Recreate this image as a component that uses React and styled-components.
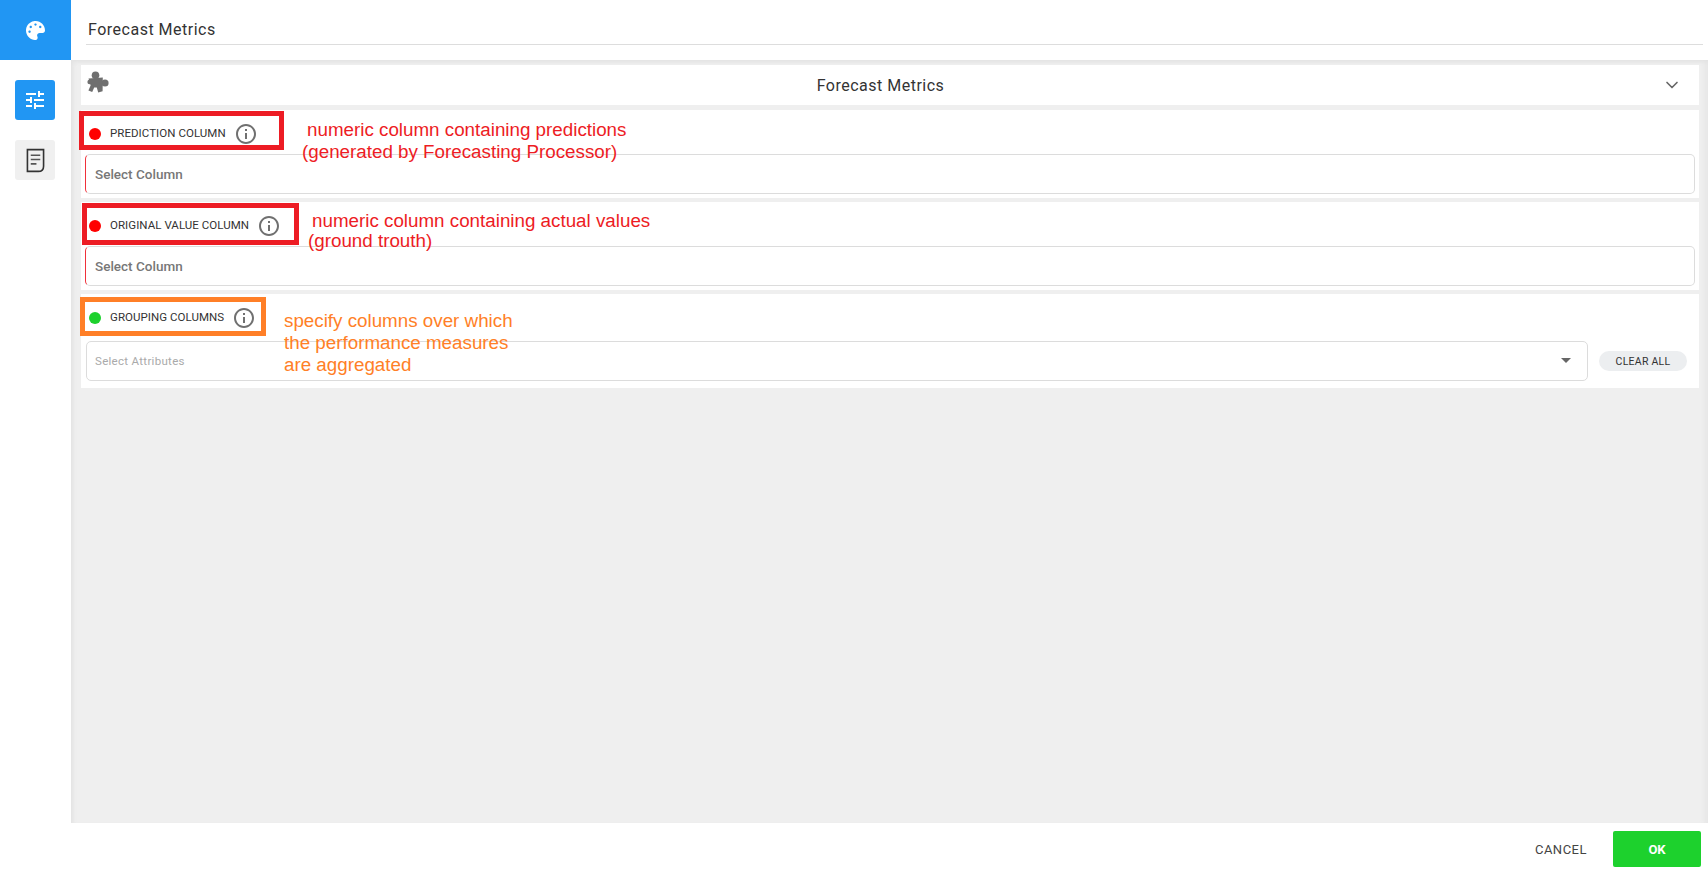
import React from "react"
import styled, { createGlobalStyle } from "styled-components"
import { FaPalette } from "react-icons/fa"
import { MdTune, MdInfoOutline } from "react-icons/md"
import { LuChevronDown } from "react-icons/lu"

const GlobalStyle = createGlobalStyle`
  html, body, #root {
    height: 100%;
    margin: 0;
  }
  body {
    font-family: Roboto, "Liberation Sans", sans-serif;
    background: #fff;
    overflow: hidden;
  }
  * {
    box-sizing: border-box;
  }
`

const Page = styled.div`
  display: grid;
  grid-template-columns: 71px 1fr;
  grid-template-rows: 60px 1fr 52px;
  width: 1708px;
  height: 875px;
`

const Brand = styled.div`
  background: #2196f3;
  color: #fff;
  display: flex;
  align-items: center;
  justify-content: center;
  font-size: 19px;
  padding-right: 1px;
`

const Header = styled.header`
  padding: 0 5px 0 15px;
`

const HeaderTitle = styled.div`
  height: 45px;
  padding: 20px 0 0 2px;
  font-size: 16px;
  line-height: 20px;
  letter-spacing: 0.5px;
  color: #333;
  border-bottom: 1px solid #ddd;
`

const Sidebar = styled.nav`
  display: flex;
  flex-direction: column;
  align-items: center;
  gap: 20px;
  padding: 20px 1px 0 0;
  grid-row: 2 / 4;
`

const SideButton = styled.button`
  width: 40px;
  height: 40px;
  padding: 0;
  border: 0;
  border-radius: 3px;
  display: flex;
  align-items: center;
  justify-content: center;
  font-size: 24px;
  background: ${props => (props.$active ? "#2196f3" : "#f0f0f0")};
  color: ${props => (props.$active ? "#fff" : "#333")};
`

const Panel = styled.main`
  background: #efefef;
  box-shadow: inset 3px 3px 4px -1px #e2e2e2, inset -6px 0 5px -3px #e6e6e6;
  padding: 5px 9px 0 10px;
  display: flex;
  flex-direction: column;
  gap: 4px;
`

const TitleCard = styled.div`
  background: #fff;
  height: 40px;
  margin-bottom: 1px;
  display: flex;
  align-items: center;
  padding: 0 17px 0 6px;
  color: #333;
`

const PuzzleMark = styled.svg`
  align-self: flex-start;
  margin-top: 6px;
  fill: #6f6f6f;
`

const CardTitle = styled.div`
  flex: 1;
  text-align: center;
  padding-right: 10px;
  font-size: 16px;
  letter-spacing: 0.5px;
`

const Chevron = styled(LuChevronDown)`
  font-size: 20px;
  color: #666;
`

const Section = styled.section`
  position: relative;
  background: #fff;
  padding-bottom: ${props => (props.$tall ? "7px" : "4px")};
`

const FieldHeader = styled.div`
  height: ${props => (props.$tall ? "47px" : "44px")};
  padding: ${props => (props.$tall ? "0" : "3px")} 0 0 8px;
  display: flex;
  align-items: center;
`

const Dot = styled.span`
  width: 12px;
  height: 12px;
  border-radius: 50%;
  background: ${props => props.$color};
`

const Label = styled.span`
  margin: -1px 0 0 9px;
  font-size: 11.5px;
  letter-spacing: 0.05px;
  color: #333;
  text-transform: uppercase;
`

const Info = styled(MdInfoOutline)`
  margin-left: 8px;
  font-size: 24px;
  color: #707070;
`

const Field = styled.div`
  height: 40px;
  margin: 0 4px;
  padding: 0 0 1px 9px;
  display: flex;
  align-items: center;
  border: 1px solid #dcdcdc;
  border-left-color: #f0303a;
  border-radius: 5px;
  font-size: 13.5px;
  font-weight: 500;
  color: #777;
`

const AttributesRow = styled.div`
  display: flex;
  align-items: center;
  padding: 0 12px 0 5px;
  gap: 11px;
`

const AttributesSelect = styled.div`
  flex: 1;
  height: 40px;
  padding: 0 16px 1px 8px;
  display: flex;
  align-items: center;
  justify-content: space-between;
  border: 1px solid #dcdcdc;
  border-radius: 5px;
  font-size: 11.5px;
  letter-spacing: 0.3px;
  color: #aaa;
`

const Caret = styled.span`
  width: 0;
  height: 0;
  border-left: 5px solid transparent;
  border-right: 5px solid transparent;
  border-top: 5px solid #666;
`

const ClearButton = styled.button`
  width: 88px;
  height: 20px;
  padding: 0;
  border: 0;
  border-radius: 10px;
  background: #eceef0;
  font-family: inherit;
  font-size: 10.5px;
  letter-spacing: 0.25px;
  color: #333;
`

// hand drawn marks that sit on top of the form
const Highlight = styled.div`
  position: absolute;
  left: ${props => props.$left}px;
  top: ${props => props.$top}px;
  width: ${props => props.$width}px;
  height: ${props => props.$height}px;
  border: 5px solid ${props => props.$color};
  pointer-events: none;
`

const Note = styled.div`
  position: absolute;
  left: ${props => props.$left}px;
  top: ${props => props.$top}px;
  font-family: "Liberation Sans", Arial, sans-serif;
  font-size: 18.8px;
  line-height: ${props => props.$line}px;
  white-space: nowrap;
  color: ${props => props.$color};
`

const NoteLine = styled.div`
  margin-left: ${props => props.$indent || 0}px;
`

const Footer = styled.footer`
  display: flex;
  align-items: center;
  justify-content: flex-end;
  gap: 26px;
  padding-right: 7px;
`

const CancelButton = styled.button`
  padding: 0;
  border: 0;
  background: none;
  font-family: inherit;
  font-size: 13px;
  letter-spacing: 0.5px;
  color: #444;
`

const OkButton = styled.button`
  width: 88px;
  height: 36px;
  border: 0;
  border-radius: 2px;
  background: #1dd12d;
  color: #fff;
  font-family: inherit;
  font-size: 13px;
  font-weight: 700;
`

const DocIcon = () => (
  <svg width="19" height="25" viewBox="0 0 20 26" fill="none" stroke="#333" strokeWidth="1.7">
    <path d="M1.5 1.5H18.5V19C18.5 22.5 16.5 24.5 13 24.5H1.5Z" />
    <path d="M5 7.5H15M5 12H15M5 16.5H11" stroke="#555" />
  </svg>
)

const PuzzleIcon = () => (
  <PuzzleMark width="22" height="22" viewBox="0 0 22 22">
    <circle cx="8.5" cy="4.2" r="3.8" />
    <circle cx="18" cy="12" r="3.6" />
    <circle cx="2.6" cy="11" r="2.2" />
    <path d="M1.5 7.5L15.8 6.5L15.6 20.2L11.2 21.4L9.8 16.4L7.2 16.6L5.2 21L1.4 19.4L3.6 14.6Z" />
  </PuzzleMark>
)

const RED = "#ed1c24"
const ORANGE = "#ff7f27"

export default function App() {
  return (
    <Page>
      <GlobalStyle />
      <Brand>
        <FaPalette />
      </Brand>
      <Header>
        <HeaderTitle>Forecast Metrics</HeaderTitle>
      </Header>
      <Sidebar>
        <SideButton $active>
          <MdTune />
        </SideButton>
        <SideButton>
          <DocIcon />
        </SideButton>
      </Sidebar>
      <Panel>
        <TitleCard>
          <PuzzleIcon />
          <CardTitle>Forecast Metrics</CardTitle>
          <Chevron />
        </TitleCard>

        <Section>
          <FieldHeader>
            <Dot $color="#ff0000" />
            <Label>Prediction Column</Label>
            <Info />
          </FieldHeader>
          <Field>Select Column</Field>
          <Highlight $left={-2} $top={1} $width={205} $height={39} $color={RED} />
          <Note $left={226} $top={9} $line={22} $color={RED}>
            <NoteLine>numeric column containing predictions</NoteLine>
            <NoteLine $indent={-5}>(generated by Forecasting Processor)</NoteLine>
          </Note>
        </Section>

        <Section>
          <FieldHeader>
            <Dot $color="#ff0000" />
            <Label>Original Value Column</Label>
            <Info />
          </FieldHeader>
          <Field>Select Column</Field>
          <Highlight $left={1} $top={1} $width={217} $height={42} $color={RED} />
          <Note $left={231} $top={9} $line={20} $color={RED}>
            <NoteLine>numeric column containing actual values</NoteLine>
            <NoteLine $indent={-4}>(ground trouth)</NoteLine>
          </Note>
        </Section>

        <Section $tall>
          <FieldHeader $tall>
            <Dot $color="#1dd12d" />
            <Label>Grouping Columns</Label>
            <Info />
          </FieldHeader>
          <AttributesRow>
            <AttributesSelect>
              Select Attributes
              <Caret />
            </AttributesSelect>
            <ClearButton>CLEAR ALL</ClearButton>
          </AttributesRow>
          <Highlight $left={-1} $top={3} $width={186} $height={39} $color={ORANGE} />
          <Note $left={203} $top={16} $line={22} $color={ORANGE}>
            <NoteLine>specify columns over which</NoteLine>
            <NoteLine>the performance measures</NoteLine>
            <NoteLine>are aggregated</NoteLine>
          </Note>
        </Section>
      </Panel>
      <Footer>
        <CancelButton>CANCEL</CancelButton>
        <OkButton>OK</OkButton>
      </Footer>
    </Page>
  )
}
